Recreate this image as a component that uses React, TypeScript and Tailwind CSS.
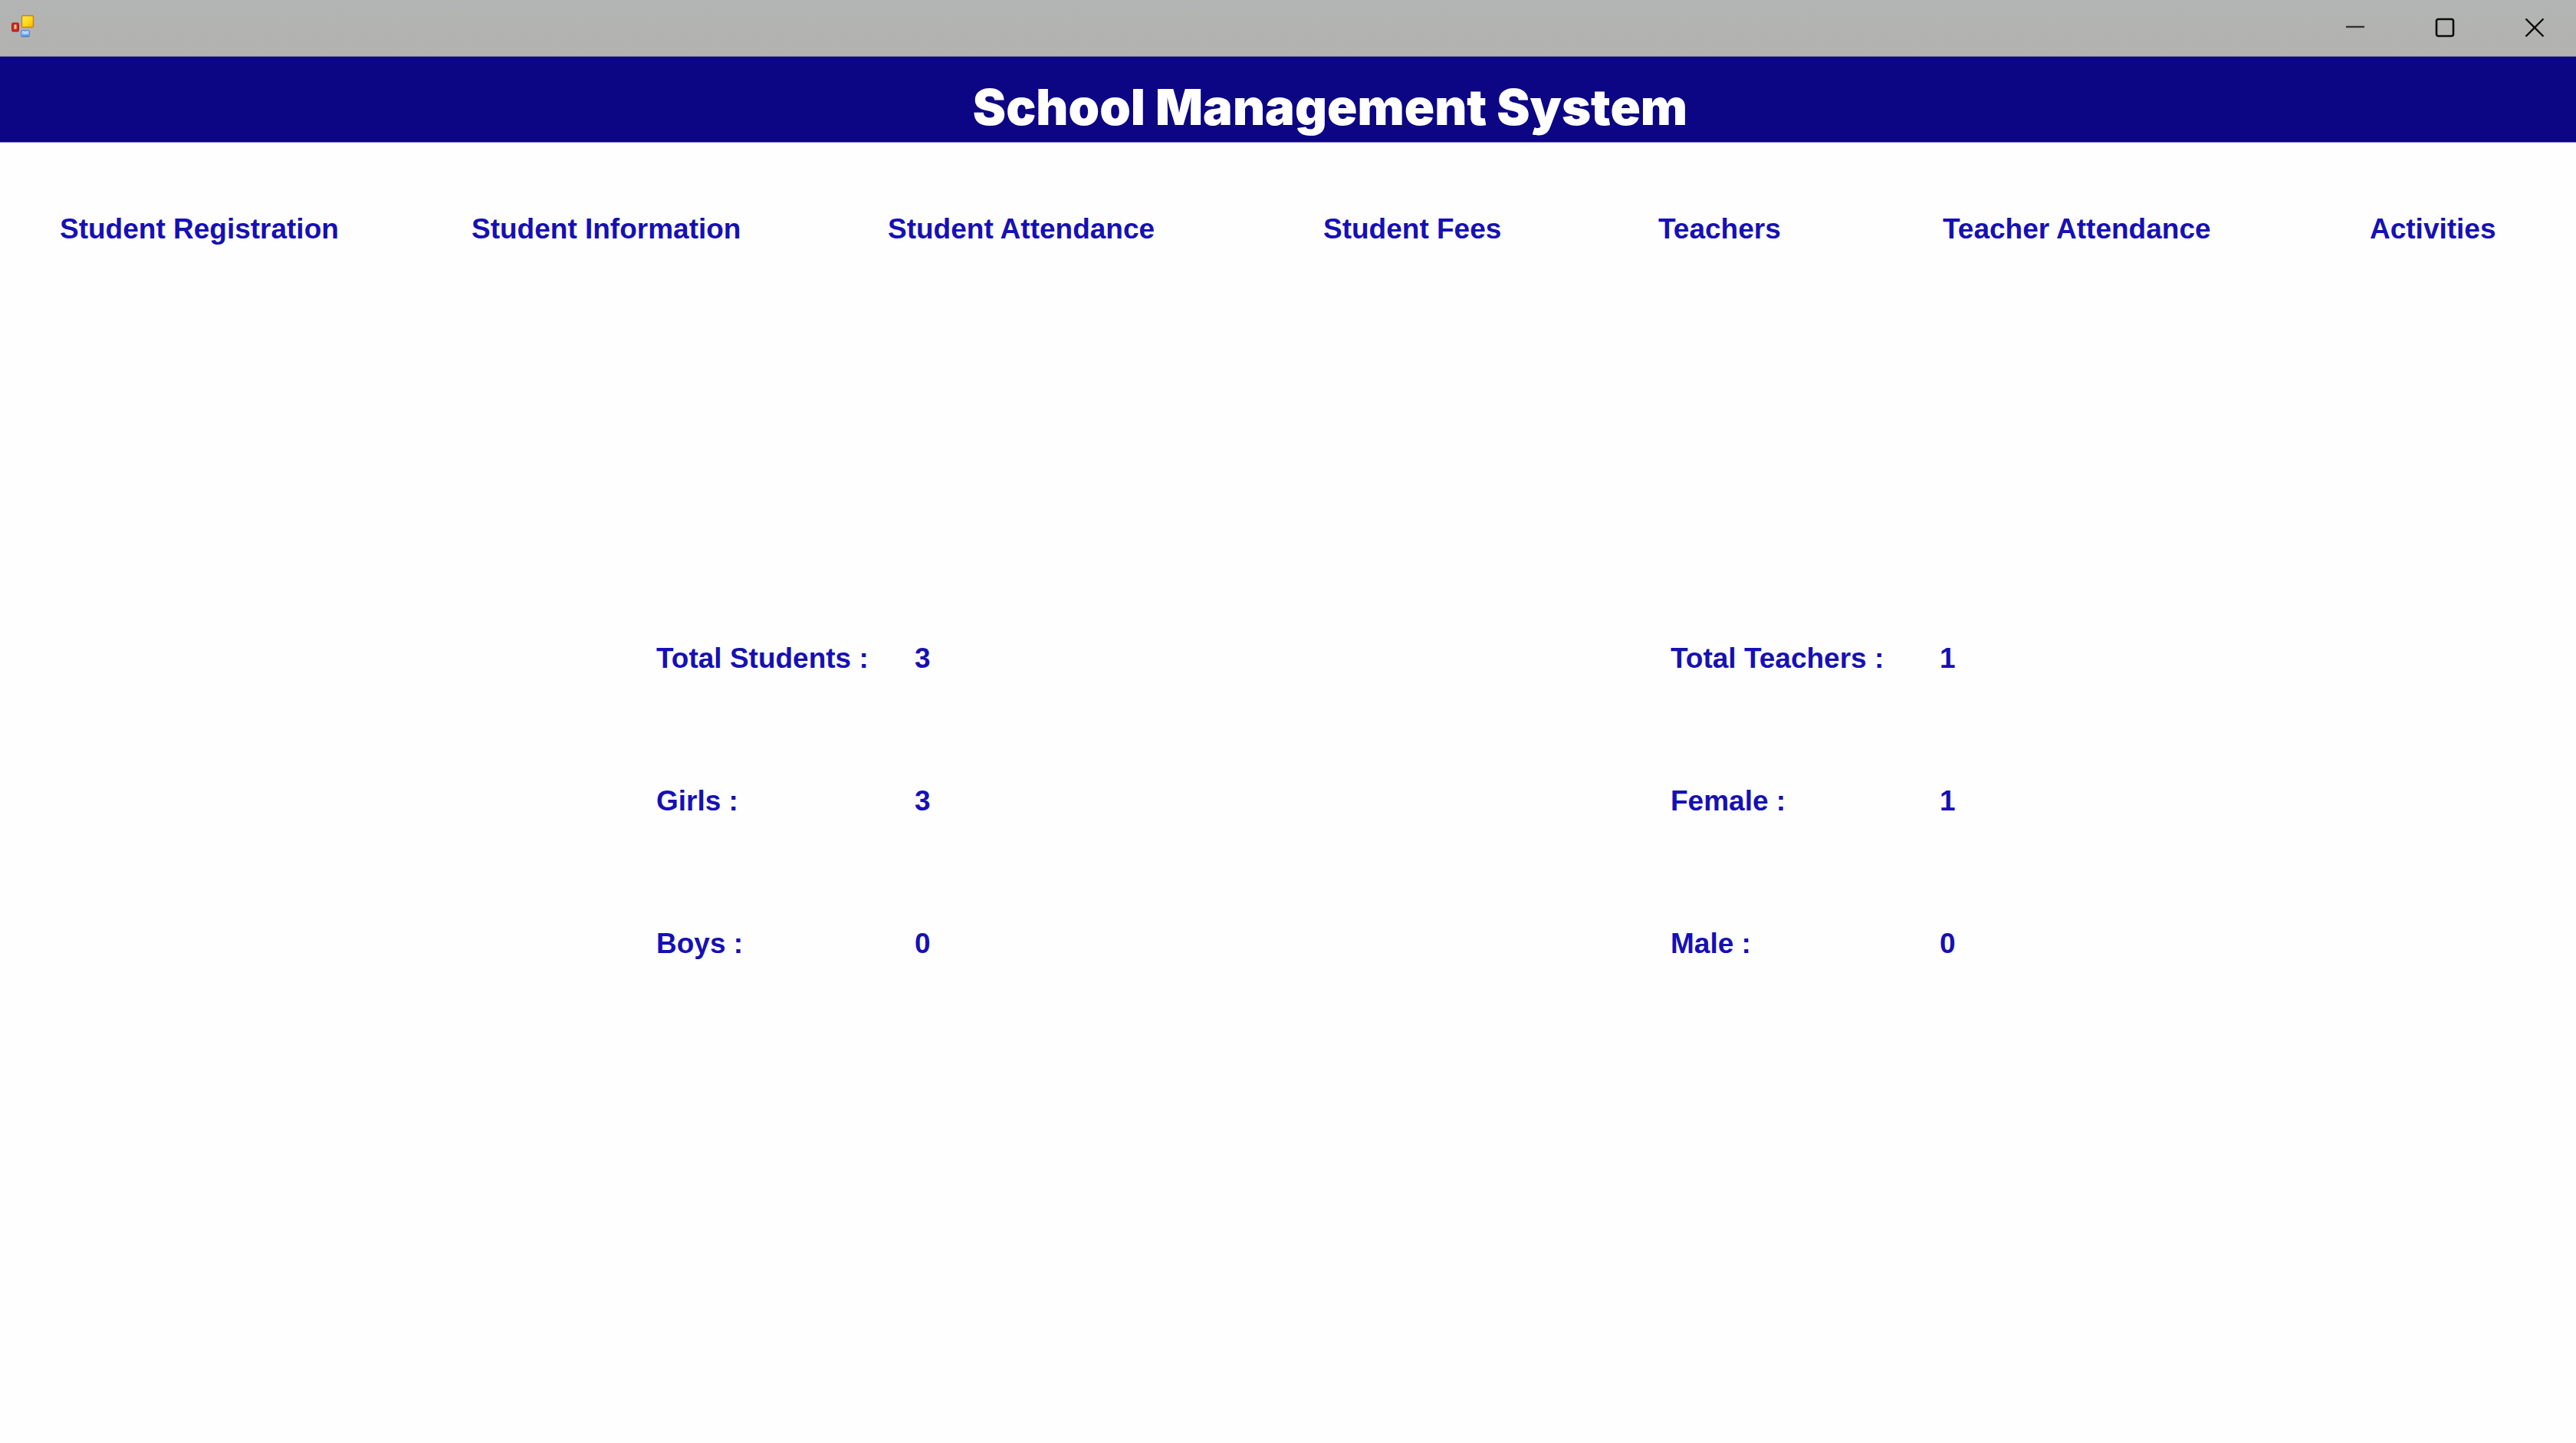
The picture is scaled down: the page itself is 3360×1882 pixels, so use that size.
import type { ReactNode } from "react";

const menu = [
  "Student Registration",
  "Student Information",
  "Student Attendance",
  "Student Fees",
  "Teachers",
  "Teacher Attendance",
  "Activities",
];

const students = [
  { label: "Total Students :", value: 3 },
  { label: "Girls :", value: 3 },
  { label: "Boys :", value: 0 },
];

const teachers = [
  { label: "Total Teachers :", value: 1 },
  { label: "Female :", value: 1 },
  { label: "Male :", value: 0 },
];

function AppIcon() {
  return (
    <svg className="h-8 w-8 overflow-visible" viewBox="0 0 32 32" aria-hidden="true">
      <defs>
        <linearGradient id="gold" x1="0" y1="0" x2="1" y2="1">
          <stop offset="0" stopColor="#ffe95a" />
          <stop offset="0.6" stopColor="#fdd512" />
          <stop offset="1" stopColor="#f2b20c" />
        </linearGradient>
        <linearGradient id="sky" x1="0" y1="0" x2="0" y2="1">
          <stop offset="0" stopColor="#8fbcf5" />
          <stop offset="0.5" stopColor="#9cc8fb" />
          <stop offset="1" stopColor="#3f78cf" />
        </linearGradient>
      </defs>
      <rect x="1.5" y="9" width="9" height="11" rx="1.5" fill="#d02a1a" stroke="#9a1c10" />
      <rect x="4.5" y="11" width="3" height="6" rx="1" fill="#f9c0ae" />
      <rect x="14.5" y="-0.5" width="15" height="15" rx="1.5" fill="url(#gold)" stroke="#c9821c" strokeWidth="1.4" />
      <rect x="13.5" y="18.5" width="11" height="8.5" rx="1.5" fill="url(#sky)" stroke="#5b88c8" />
      <path d="M16 20l3 3 3-3" fill="none" stroke="#cfe4ff" strokeWidth="1.2" />
    </svg>
  );
}

function WindowButton({ label, children }: { label: string; children: ReactNode }) {
  return (
    <button type="button" aria-label={label} className="flex h-full w-27 items-center justify-center">
      <svg className="h-7 w-7" viewBox="0 0 28 28" fill="none" stroke="#0c0c0c" strokeWidth="2.4" aria-hidden="true">
        {children}
      </svg>
    </button>
  );
}

function Stats({ name, items, columns }: { name: string; items: { label: string; value: number }[]; columns: string }) {
  return (
    <dl aria-label={name} className="flex flex-col gap-[138px]">
      {items.map((item) => (
        <div key={item.label} className={`grid ${columns}`}>
          <dt>{item.label}</dt>
          <dd>{item.value}</dd>
        </div>
      ))}
    </dl>
  );
}

export default function App() {
  return (
    <div className="min-h-screen bg-[#fefefe] font-['Liberation_Sans',Arial,sans-serif] text-[37px] leading-[48px] font-bold text-[#1610b4]">
      <div className="flex h-[74px] items-center justify-between border-b border-[#7f7fa6] bg-linear-to-b from-[#b2b5b4] to-[#b3b2af] pl-3.5">
        <AppIcon />
        <div className="flex h-full items-center gap-[9px] pb-0.5">
          <WindowButton label="Minimize">
            <path d="M2 13h24" stroke="#333333" />
          </WindowButton>
          <WindowButton label="Maximize">
            <rect x="3" y="3" width="22" height="22" rx="2.5" strokeWidth="2.6" />
          </WindowButton>
          <WindowButton label="Close">
            <path d="M2.5 2.5l23 23M25.5 2.5l-23 23" />
          </WindowButton>
        </div>
      </div>

      <header className="flex h-28 items-center justify-center border-b border-[#6f6cb4] bg-[#0c0584] pt-5 pl-[110px]">
        <h1 className="font-['Inter','Arial_Black',sans-serif] text-[65px] leading-[80px] font-black text-white">
          School Management System
        </h1>
      </header>

      <nav aria-label="Main" className="pt-[89px] pl-[78px]">
        <ul className="grid grid-cols-[537fr_543fr_568fr_437fr_371fr_557fr_269fr]">
          {menu.map((item) => (
            <li key={item}>
              <a href="#" className="whitespace-nowrap">
                {item}
              </a>
            </li>
          ))}
        </ul>
      </nav>

      <main className="grid grid-cols-[1323fr_1181fr] pt-[512px] pl-[856px]">
        <Stats name="Students" items={students} columns="grid-cols-[337px_1fr]" />
        <Stats name="Teachers" items={teachers} columns="grid-cols-[351px_1fr]" />
      </main>
    </div>
  );
}
